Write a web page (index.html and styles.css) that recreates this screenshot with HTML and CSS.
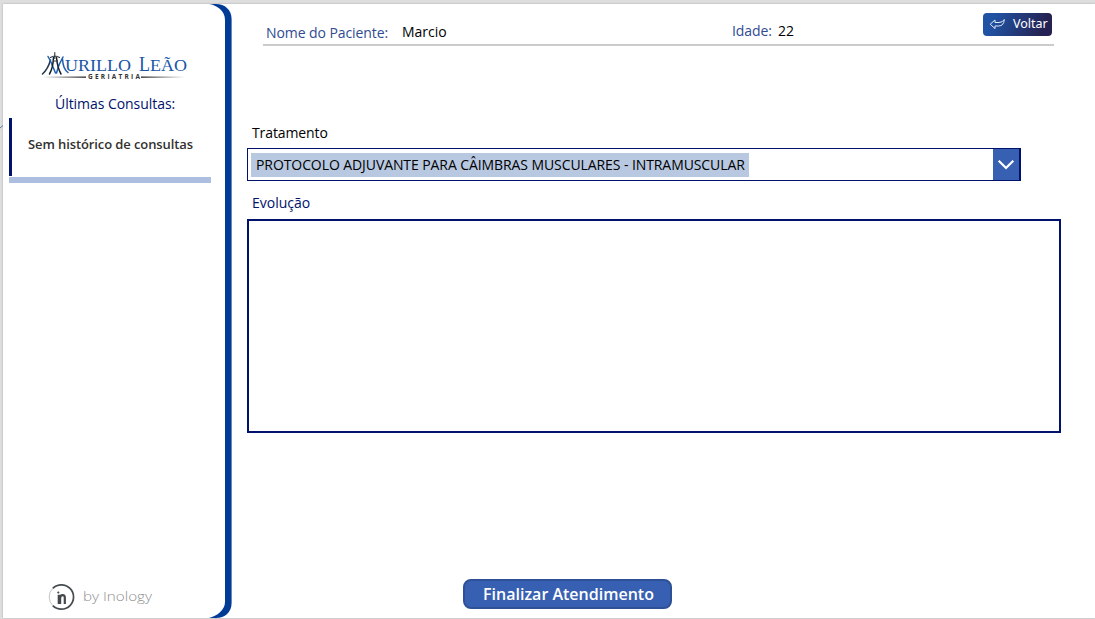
FILE: index.html
```html
<!DOCTYPE html>
<html lang="pt-BR">
<head>
<meta charset="utf-8">
<title>Atendimento</title>
<link rel="stylesheet" href="styles.css">
</head>
<body>
<svg class="edge-mark" viewBox="0 0 3 4"><path d="M0 3L3 .5" stroke="#6576a0" fill="none"/></svg>
<div class="app">
  <aside class="sidebar">
    <div class="side-content">
      <svg class="logo" width="150" height="30" viewBox="40 51 150 30" role="img" aria-label="Murillo Leão Geriatria">
        <defs>
          <linearGradient id="ruleL"><stop offset="0" stop-color="#333" stop-opacity="0"/><stop offset="1" stop-color="#222"/></linearGradient>
          <linearGradient id="ruleR"><stop offset="0" stop-color="#222"/><stop offset="1" stop-color="#333" stop-opacity="0"/></linearGradient>
        </defs>
        <g fill="none" stroke-linecap="round">
          <path d="M50.500 60Q48 69 42.500 74" stroke="#24364e" stroke-width="1.500"/>
          <path d="M48 56.500L50.500 61L55.500 73M63 57L59 65L56.500 73M62.500 59Q63 69 68 72.500" stroke="#1d5fae" stroke-width="1.500"/>
          <path d="M53.500 57.500Q53 68 49.500 74M56.500 57.500Q57.500 68 61 74" stroke="#17202d" stroke-width="1.500"/>
          <path d="M50.500 57.500Q55 54.500 59.500 57.500M54.800 52.500v6M53.500 61h4" stroke="#2c3440" stroke-width="1.100"/>
        </g>
        <g class="logo-name">
          <text x="65" y="71" font-size="17" textLength="66" lengthAdjust="spacingAndGlyphs">URILLO</text>
          <text x="139" y="71" font-size="20" textLength="11" lengthAdjust="spacingAndGlyphs">L</text>
          <text x="150" y="71" font-size="17" textLength="37" lengthAdjust="spacingAndGlyphs">EÃO</text>
        </g>
        <rect x="42" y="76.500" width="44" height="1.300" fill="url(#ruleL)"/>
        <rect x="141" y="76.500" width="44" height="1.300" fill="url(#ruleR)"/>
        <text class="logo-sub" x="88" y="79.200" textLength="52">GERIATRIA</text>
      </svg>
      <h2 class="side-title">Últimas Consultas:</h2>
      <div class="history">Sem histórico de consultas</div>
      <div class="brand">
        <svg width="28" height="28" viewBox="0 0 28 28" aria-hidden="true">
          <path d="M4.800 5.300A12.200 12.200 0 1 1 4.800 22.700" fill="none" stroke="#454b4e" stroke-width="1.700"/>
          <path d="M4.800 5.300A12.200 12.200 0 0 0 4.800 22.700" fill="none" stroke="#aaa" stroke-width=".7"/>
          <path d="M10.800 11.800v9.200M16.800 21v-6.500q0-2.400-2.100-2.400-2.600 0-2.600 2.800v6.100" fill="none" stroke="#42484b" stroke-width="2.200"/>
          <circle cx="10.300" cy="9.500" r="1.100" fill="#42484b"/>
        </svg>
        <svg class="brand-name" width="72" height="20" viewBox="0 0 72 20"><text x="0" y="13.500" textLength="69" lengthAdjust="spacingAndGlyphs">by Inology</text></svg>
      </div>
    </div>
    <svg class="side-edge" width="24" height="614" viewBox="208 4 24 614" aria-hidden="true">
      <path d="M209 4H216C225 4 231.600 10 231.600 19V603C231.600 612 225 618 216 618H209C217 616 225 610 225 602V20C225 11 217 5 209 4Z" fill="#003c96"/>
    </svg>
  </aside>
  <main class="main">
    <header class="patient">
      <span class="label name-label">Nome do Paciente:</span>
      <span class="value name-value">Marcio</span>
      <span class="label age-label">Idade:</span>
      <span class="value age-value">22</span>
      <button class="back">
        <svg width="17" height="14" viewBox="0 0 17 14" aria-hidden="true"><path d="M1.200 7.200L6 3V5.500H10Q13.500 5.500 15.300 2.500Q14.900 9 9.500 9H6V11.600Z" fill="none" stroke="#e4e9f5" stroke-width="1" stroke-linejoin="round"/></svg>
        <span>Voltar</span>
      </button>
    </header>
    <label class="field-label treatment-label">Tratamento</label>
    <div class="select">
      <span class="selected">PROTOCOLO ADJUVANTE PARA CÂIMBRAS MUSCULARES - INTRAMUSCULAR</span>
      <span class="arrow"><svg width="18" height="12" viewBox="0 0 18 12"><path d="M1.700 1.700L9 9l7.300-7.300" fill="none" stroke="#fff" stroke-width="2.200"/></svg></span>
    </div>
    <label class="field-label evolution-label">Evolução</label>
    <div class="editor"></div>
    <button class="finish">Finalizar Atendimento</button>
  </main>
</div>
</body>
</html>
```
FILE: styles.css
```css
* { box-sizing: border-box; }
body {
  margin: 0;
  height: 619px;
  padding: 4px 0 1px 3px;
  overflow: hidden;
  background: #dedede;
  font: 14px/20px "Open Sans", "Noto Sans", sans-serif;
}
.edge-mark { position: absolute; left: 0; top: 125px; width: 3px; height: 4px; }
.app {
  display: flex;
  height: 614px;
  background: #fff;
  box-shadow: 0 0 2px #aaa;
}
.sidebar { display: flex; flex: none; width: 229px; }
.side-content { display: flex; flex-direction: column; flex: none; width: 205px; padding-top: 47px; }
.side-edge { display: block; flex: none; }
.logo { display: block; flex: none; margin-left: 37px; }
.logo-name { font-family: "Liberation Serif", serif; fill: #1756a6; }
.logo-sub { font: bold 6.5px "Open Sans", sans-serif; fill: #333; }
.side-title { margin: 13px 0 0 52px; font-size: 14px; line-height: 20px; font-weight: 400; letter-spacing: -0.05px; color: #00126b; white-space: nowrap; }
.history {
  width: 202px;
  height: 65px;
  margin: 4px 0 0 6px;
  padding: 16px 0 0 19px;
  border-bottom: 6px solid #adbfe0;
  background: linear-gradient(#00126b, #00126b) 0 0 / 3px 58px no-repeat;
  font-size: 13px;
  font-weight: 600;
  letter-spacing: -0.1px;
  color: #323130;
  white-space: nowrap;
}
.brand { display: flex; align-items: center; gap: 7px; margin: auto 0 7px 45px; }
.brand-name { font: 300 13px "Open Sans", sans-serif; fill: #909090; }
.main { display: flex; flex-direction: column; align-items: flex-start; flex: 1; padding-left: 15px; }
.patient {
  display: flex;
  align-items: flex-start;
  width: 791px;
  height: 42px;
  margin-left: 16px;
  border-bottom: 2px solid #cbcbcb;
  white-space: nowrap;
}
.label { color: #2f4b91; letter-spacing: -0.08px; }
.value { color: #000; }
.name-label { width: 139px; padding: 19px 0 0 3px; }
.name-value { width: 330px; padding-top: 18px; }
.age-label { width: 46px; padding-top: 17px; }
.age-value { padding-top: 17px; }
.back {
  display: flex;
  align-items: center;
  gap: 7px;
  width: 69px;
  height: 23px;
  margin: 9px 2px 0 auto;
  padding: 0 0 1px 6px;
  border: 0;
  border-radius: 4px;
  background: linear-gradient(110deg, #2053a4 15%, #252253 85%);
  color: #fff;
  font: 12.5px/20px "Noto Sans", sans-serif;
}
.field-label { margin-left: 5px; }
.treatment-label { margin-top: 77px; color: #000; letter-spacing: -0.1px; }
.select {
  display: flex;
  align-items: center;
  width: 774px;
  height: 33px;
  margin-top: 5px;
  padding-left: 3px;
  border: 1px solid #00126b;
  border-right-width: 2px;
}
.selected { height: 24px; padding: 0 4px 0 5px; background: #b8c8e1; color: #000; line-height: 24px; letter-spacing: -0.085px; white-space: nowrap; }
.arrow { display: flex; align-items: center; justify-content: center; width: 26px; height: 31px; margin-left: auto; background: #3860b2; }
.evolution-label { margin-top: 12px; color: #00126b; }
.editor { width: 814px; height: 214px; margin-top: 6px; border: 2px solid #00126b; }
.finish {
  width: 209px;
  height: 30px;
  margin: auto 0 9px 216px;
  padding: 0 0 1px 2px;
  border: 2px solid #2d5096;
  border-radius: 8px;
  background: #3860b2;
  color: #fff;
  font: 600 16px/20px "Open Sans", sans-serif;
}
```
